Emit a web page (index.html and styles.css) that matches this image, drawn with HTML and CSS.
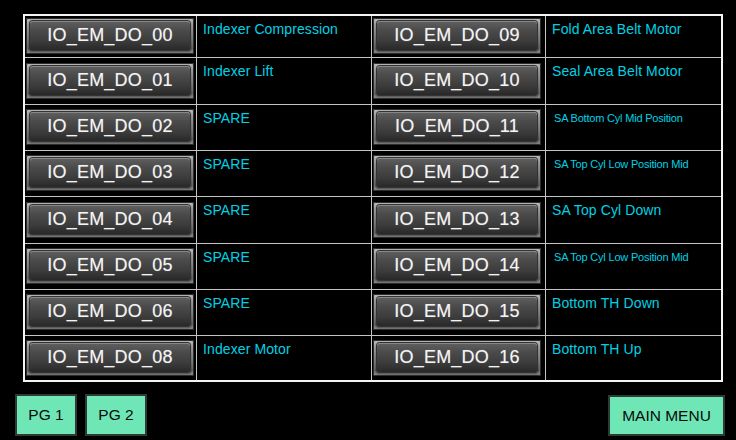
FILE: index.html
```html
<!DOCTYPE html>
<html>
<head>
<meta charset="utf-8">
<link rel="stylesheet" href="styles.css">
</head>
<body>
<div class="screen">
  <div class="table">
    <div class="cell btn-cell"><div class="io"><span>IO_EM_DO_00</span></div></div>
    <div class="cell txt">Indexer Compression</div>
    <div class="cell btn-cell"><div class="io"><span>IO_EM_DO_09</span></div></div>
    <div class="cell txt">Fold Area Belt Motor</div>

    <div class="cell btn-cell"><div class="io"><span>IO_EM_DO_01</span></div></div>
    <div class="cell txt">Indexer Lift</div>
    <div class="cell btn-cell"><div class="io"><span>IO_EM_DO_10</span></div></div>
    <div class="cell txt">Seal Area Belt Motor</div>

    <div class="cell btn-cell"><div class="io"><span>IO_EM_DO_02</span></div></div>
    <div class="cell txt">SPARE</div>
    <div class="cell btn-cell"><div class="io"><span>IO_EM_DO_11</span></div></div>
    <div class="cell txt small">SA Bottom Cyl Mid Position</div>

    <div class="cell btn-cell"><div class="io"><span>IO_EM_DO_03</span></div></div>
    <div class="cell txt">SPARE</div>
    <div class="cell btn-cell"><div class="io"><span>IO_EM_DO_12</span></div></div>
    <div class="cell txt small">SA Top Cyl Low Position Mid</div>

    <div class="cell btn-cell"><div class="io"><span>IO_EM_DO_04</span></div></div>
    <div class="cell txt">SPARE</div>
    <div class="cell btn-cell"><div class="io"><span>IO_EM_DO_13</span></div></div>
    <div class="cell txt">SA Top Cyl Down</div>

    <div class="cell btn-cell"><div class="io"><span>IO_EM_DO_05</span></div></div>
    <div class="cell txt">SPARE</div>
    <div class="cell btn-cell"><div class="io"><span>IO_EM_DO_14</span></div></div>
    <div class="cell txt small">SA Top Cyl Low Position Mid</div>

    <div class="cell btn-cell"><div class="io"><span>IO_EM_DO_06</span></div></div>
    <div class="cell txt">SPARE</div>
    <div class="cell btn-cell"><div class="io"><span>IO_EM_DO_15</span></div></div>
    <div class="cell txt">Bottom TH Down</div>

    <div class="cell btn-cell"><div class="io"><span>IO_EM_DO_08</span></div></div>
    <div class="cell txt">Indexer Motor</div>
    <div class="cell btn-cell"><div class="io"><span>IO_EM_DO_16</span></div></div>
    <div class="cell txt">Bottom TH Up</div>
  </div>
  <div class="footer">
    <div class="nav-left">
      <div class="nav pg">PG 1</div>
      <div class="nav pg">PG 2</div>
    </div>
    <div class="nav menu">MAIN MENU</div>
  </div>
</div>
</body>
</html>
```
FILE: styles.css
```css
html, body {
  margin: 0;
  padding: 0;
  background: #000;
}
.screen {
  width: 736px;
  height: 440px;
  box-sizing: border-box;
  padding-top: 14px;
  font-family: "Liberation Sans", Arial, sans-serif;
}
.table {
  margin-left: 23px;
  width: 700px;
  box-sizing: border-box;
  border: 2px solid #f4f4f4;
  display: grid;
  grid-template-columns: 171px 175px 174px 176px;
  grid-template-rows: 41px 47px 46px 46px 47px 46px 46px 45px;
}
.cell {
  box-sizing: border-box;
  border-top: 1px solid #c4c4c4;
}
.cell:nth-child(-n+4) {
  border-top: none;
}
.cell:nth-child(4n+2),
.cell:nth-child(4n+3),
.cell:nth-child(4n+4) {
  border-left: 1px solid #c4c4c4;
}
.btn-cell {
  display: flex;
  align-items: center;
  padding: 1px 2px 2px 1px;
}
.io {
  width: 168px;
  height: 36px;
  box-sizing: border-box;
  padding: 3px 4px 4px 4px;
  background:
    linear-gradient(to right, rgba(200,200,200,0.55) 0px, rgba(200,200,200,0) 5px, rgba(200,200,200,0) calc(100% - 5px), rgba(200,200,200,0.55) 100%),
    linear-gradient(to bottom, #c0c0c0 0%, #7e7e7e 20%, #4a4a4a 60%, #222 85%, #909090 100%);
  border-radius: 2px;
  box-shadow: inset 0 0 0 1px #2c2c2c;
}
.io span {
  display: flex;
  height: 100%;
  align-items: center;
  justify-content: center;
  border-radius: 3px;
  background: linear-gradient(to bottom, #606060 0%, #4c4c4c 30%, #3b3b3b 70%, #282828 100%);
  box-shadow: inset 0 1px 0 rgba(255,255,255,0.25), 0 0 0 1px #333;
  color: #f4f4f4;
  font-size: 18px;
  letter-spacing: 0.2px;
  text-shadow: 0 0 1px rgba(255,255,255,0.4);
}
.txt {
  color: #00d2e4;
  font-size: 14px;
  letter-spacing: 0.1px;
  padding: 5px 0 0 6px;
  white-space: nowrap;
}
.txt.small {
  font-size: 11px;
  padding-top: 7px;
  padding-left: 8px;
  letter-spacing: -0.2px;
}
.footer {
  display: flex;
  justify-content: space-between;
  align-items: flex-start;
  margin-top: 12px;
  padding: 0 11px 0 15px;
}
.nav-left {
  display: flex;
  gap: 8px;
}
.nav {
  box-sizing: border-box;
  background: #6ee6b6;
  border: 2px solid #2e3a34;
  color: #0a0a0a;
  font-size: 15.5px;
  display: flex;
  align-items: center;
  justify-content: center;
}
.pg {
  width: 62px;
  height: 42px;
}
.menu {
  width: 117px;
  height: 41px;
  margin-top: 1px;
}
```
